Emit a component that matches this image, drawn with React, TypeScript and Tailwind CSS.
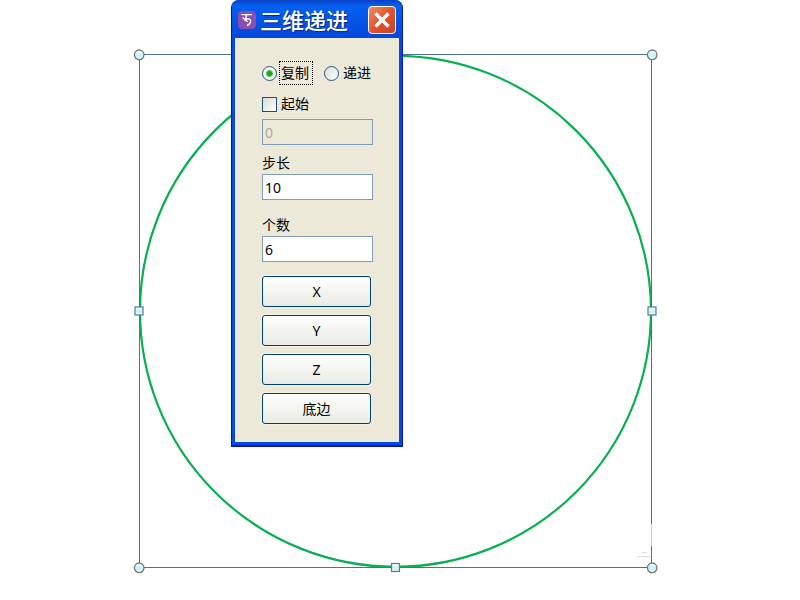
import React, { useState } from "react";

const corners = [
  [8, 8],
  [521, 8],
  [8, 521],
  [521, 521],
];

const edges = [
  [8, 264],
  [521, 264],
  [264.5, 520.5],
];

function SelectedCircle() {
  return (
    <svg
      className="absolute left-[131px] top-[47px]"
      width="530"
      height="530"
      viewBox="0 0 530 530"
      fill="none"
      aria-hidden="true"
    >
      <defs>
        <linearGradient id="handle" x1="0" y1="0" x2="0" y2="1">
          <stop offset="0" stopColor="#ffffff" />
          <stop offset="0.5" stopColor="#c9f0f3" />
          <stop offset="1" stopColor="#e9fafb" />
        </linearGradient>
      </defs>
      <circle cx="264.5" cy="264.3" r="255.5" stroke="#07b050" strokeWidth="2.2" />
      <rect x="8.5" y="7.5" width="512" height="513" stroke="#4e7197" />
      {/* shadow under the lower right handle */}
      <path d="M506 509.5h14M511 505.5h5M514 527l3-3M520 528v-3M525 527l-2-3" stroke="#dcdcdc" />
      <path d="M520.5 477v22" stroke="#c3d0de" />
      {corners.map(([x, y]) => (
        <circle key={`${x}-${y}`} cx={x + 0.2} cy={y - 0.2} r="4.8" fill="url(#handle)" stroke="#6c7c88" strokeWidth="1.3" />
      ))}
      {edges.map(([x, y]) => (
        <rect key={`${x}-${y}`} x={x - 4} y={y - 4} width="8" height="8" fill="url(#handle)" stroke="#56789b" strokeWidth="1.2" />
      ))}
    </svg>
  );
}

function TitleBar() {
  return (
    <header className="flex h-[38px] items-center bg-linear-to-b from-[#0a3fc4] via-[#0560f0] via-15% to-[#0547dc] pl-[6px] pr-[6px] pt-[2px]">
      <svg className="shrink-0" width="18" height="18" viewBox="0 0 18 18" fill="none" aria-hidden="true">
        <rect width="18" height="18" rx="4" fill="#8a4db0" />
        <path d="M3.5 3.6h10.5M8.6 3.6L7.4 8.6C9.2 7.2 13 7.4 12.6 10.4c-.2 2-1.6 3.4-3.6 4.2M4.6 6.4l5.2 4.6" stroke="#fff" strokeWidth="1.4" />
      </svg>
      <h1 className="ml-[4px] flex-1 whitespace-nowrap text-[22px] leading-[30px] font-medium text-white [text-shadow:1px_1px_1px_#06298c]">
        三维递进
      </h1>
      <button
        type="button"
        aria-label="关闭"
        className="flex size-7 shrink-0 items-center justify-center rounded-[4px] border border-white bg-linear-to-br from-[#f08a68] via-[#e2532d] to-[#c9421b]"
      >
        <svg width="18" height="18" viewBox="0 0 18 18" fill="none" aria-hidden="true">
          <path d="M2.5 2.5l13 13M15.5 2.5l-13 13" stroke="#fff" strokeWidth="3.4" />
        </svg>
      </button>
    </header>
  );
}

const inputClass =
  "block h-[26px] w-full border border-[#7f9db9] bg-white px-[2px] text-[14px] text-black outline-none disabled:bg-[#ece9d8] disabled:text-[#aca899]";

const radioClass =
  "size-[15px] shrink-0 appearance-none rounded-full border border-[#24577f] bg-linear-to-br from-[#deded8] to-white checked:bg-[radial-gradient(circle,#21a121_0_2px,#5fc45f_3px,#f4f4f0_4px)]";

function StepDialog() {
  const [mode, setMode] = useState("copy");
  const [useStart, setUseStart] = useState(false);
  const [start, setStart] = useState("0");
  const [step, setStep] = useState("10");
  const [count, setCount] = useState("6");

  return (
    <section className="absolute left-[231px] top-0 w-[172px] overflow-hidden rounded-t-[8px] border-x border-b-2 border-[#0418a8] bg-[#0549e4]">
      <TitleBar />
      <form className="mx-[3px] mb-[3px] bg-[#ece9d8] pt-[23px] pr-[26px] pb-[18px] pl-[27px]" onSubmit={(e) => e.preventDefault()}>
        <div className="flex h-6 items-center">
          <input id="copy" type="radio" name="mode" className={radioClass} checked={mode === "copy"} onChange={() => setMode("copy")} />
          <label htmlFor="copy" className="ml-[2px] flex h-6 items-center border border-dotted border-black pl-px pr-[3px] whitespace-nowrap">
            复制
          </label>
          <input id="step-mode" type="radio" name="mode" className={`${radioClass} ml-[11px]`} checked={mode === "step"} onChange={() => setMode("step")} />
          <label htmlFor="step-mode" className="ml-[4px] whitespace-nowrap">
            递进
          </label>
        </div>

        <div className="mt-[9px] flex h-5 items-center">
          <input
            id="use-start"
            type="checkbox"
            className="size-[15px] shrink-0 appearance-none border border-[#1c5180] bg-linear-to-br from-[#dcdcd7] to-white checked:bg-none checked:bg-[#21a121]"
            checked={useStart}
            onChange={(e) => setUseStart(e.target.checked)}
          />
          <label htmlFor="use-start" className="ml-[4px]">
            起始
          </label>
        </div>
        <input
          aria-label="起始"
          className={`${inputClass} mt-[5px]`}
          disabled={!useStart}
          value={start}
          onChange={(e) => setStart(e.target.value)}
        />

        <label htmlFor="step" className="mt-2 block">
          步长
        </label>
        <input id="step" className={`${inputClass} mt-px`} value={step} onChange={(e) => setStep(e.target.value)} />

        <label htmlFor="count" className="mt-[15px] block">
          个数
        </label>
        <input id="count" className={`${inputClass} mt-px`} value={count} onChange={(e) => setCount(e.target.value)} />

        <div className="mt-[14px] mr-[2px] flex flex-col gap-2">
          {["X", "Y", "Z", "底边"].map((name) => (
            <button
              key={name}
              type="button"
              className="h-[31px] rounded-[3px] border border-[#003c74] bg-linear-to-b from-white via-[#f4f4f0] to-[#ebebe4] text-center shadow-[0_0_1px_1px_#f6f4ea]"
            >
              {name}
            </button>
          ))}
        </div>
      </form>
    </section>
  );
}

export default function App() {
  return (
    <main className="relative min-h-screen overflow-hidden bg-white font-['Noto_Sans','Noto_Sans_CJK_SC',sans-serif] text-[14px] leading-[20px] text-black">
      <SelectedCircle />
      <StepDialog />
    </main>
  );
}
